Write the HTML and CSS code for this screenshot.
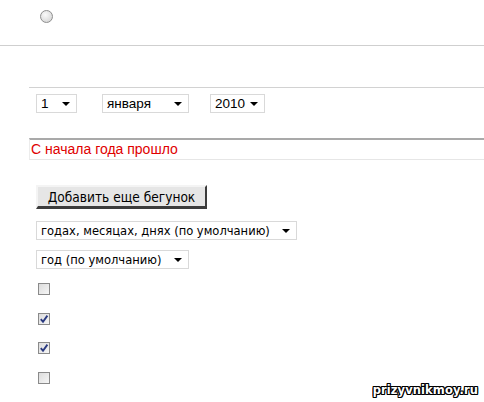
FILE: index.html
```html
<!DOCTYPE html>
<html>
<head>
<meta charset="utf-8">
<link rel="stylesheet" href="styles.css">
</head>
<body>
<div class="top">
  <span class="radio"></span>
</div>
<div class="rule"></div>
<div class="content">
  <div class="date-block">
    <div class="date-row">
      <div class="sel sel-day"><span>1</span><i class="arrow"></i></div>
      <div class="sel sel-month"><span>января</span><i class="arrow"></i></div>
      <div class="sel sel-year"><span>2010</span><i class="arrow"></i></div>
    </div>
  </div>
  <div class="result">С начала года прошло</div>
  <div class="controls">
    <button class="btn">Добавить еще бегунок</button>
    <div class="sel sel-units t"><span>годах, месяцах, днях (по умолчанию)</span><i class="arrow"></i></div>
    <div class="sel sel-year2 t"><span>год (по умолчанию)</span><i class="arrow"></i></div>
    <div class="checks">
      <span class="cb"></span>
      <span class="cb on"><svg viewBox="0 0 12 12" width="12" height="12"><path d="M2.8 6.2 L5 8.8 L9.4 2.6" fill="none" stroke="#2a3a80" stroke-width="1.9"/></svg></span>
      <span class="cb on"><svg viewBox="0 0 12 12" width="12" height="12"><path d="M2.8 6.2 L5 8.8 L9.4 2.6" fill="none" stroke="#2a3a80" stroke-width="1.9"/></svg></span>
      <span class="cb"></span>
    </div>
  </div>
</div>
<div class="watermark">prizyvnikmoy.ru</div>
</body>
</html>
```

FILE: styles.css
```css
html, body {
  margin: 0;
  padding: 0;
  background: #fff;
  width: 484px;
  height: 402px;
  overflow: hidden;
  position: relative;
  font-family: "Liberation Sans", Arial, sans-serif;
  font-size: 13.5px;
  color: #000;
}
.top {
  height: 45px;
  padding-left: 40px;
  padding-top: 10px;
  box-sizing: border-box;
}
.radio {
  display: block;
  width: 11px;
  height: 11px;
  border-radius: 50%;
  border: 1px solid #8e8e8e;
  background: radial-gradient(circle at 40% 35%, #fafafa 0, #e2e2e2 55%, #cfcfcf 100%);
}
.rule {
  height: 1px;
  background: #cfcfcf;
}
.content {
  padding-left: 29px;
  padding-top: 41px;
}
.date-block {
  border-top: 1px solid #d2d2d2;
  padding: 6px 0 0 7px;
  height: 44px;
}
.date-row {
  display: flex;
  gap: 0;
}
.sel {
  display: flex;
  align-items: center;
  justify-content: space-between;
  box-sizing: border-box;
  height: 19px;
  border: 1px solid #d9d9d9;
  background: #fff;
  padding: 0 6px 0 4px;
  line-height: 17px;
}
.sel .arrow {
  width: 0;
  height: 0;
  border-left: 4px solid transparent;
  border-right: 4px solid transparent;
  border-top: 4px solid #000;
}
.sel-day { width: 41px; }
.sel-month { width: 87px; margin-left: 25px; }
.sel-year { width: 55px; margin-left: 21px; }
.result {
  border-top: 2px solid #a9a9a9;
  border-left: 1px solid #ececec;
  border-bottom: 1px solid #e6e6e6;
  color: #e00000;
  padding: 0 0 0 1px;
  font-size: 14px;
  line-height: 19px;
  height: 19px;
}
.controls {
  padding: 25px 0 0 7px;
}
.btn {
  display: block;
  width: 171px;
  height: 24px;
  box-sizing: border-box;
  background: #e6e6e6;
  border-top: 2px solid #f4f4f4;
  border-left: 2px solid #f4f4f4;
  border-right: 2px solid #3c3c3c;
  border-bottom: 3px solid #3c3c3c;
  font-family: "DejaVu Sans Condensed", Tahoma, sans-serif;
  font-size: 13.6px;
  color: #000;
  padding: 0;
  margin: 0;
}
.t {
  font-family: "DejaVu Sans Condensed", Tahoma, sans-serif;
  font-size: 12.8px;
}
.sel-units { width: 261px; margin-top: 12px; }
.sel-year2 { width: 153px; margin-top: 10px; }
.checks {
  display: flex;
  flex-direction: column;
  gap: 17.7px;
  padding: 14px 0 0 2px;
}
.cb {
  display: block;
  width: 12px;
  height: 12px;
  box-sizing: border-box;
  border: 1px solid #8a8a8a;
  background: linear-gradient(135deg, #dcdcdc, #f6f6f6);
  position: relative;
}
.cb svg {
  position: absolute;
  left: -1px;
  top: -1px;
}
.watermark {
  position: absolute;
  right: 6px;
  bottom: 5px;
  font-family: "DejaVu Sans", sans-serif;
  font-weight: bold;
  font-size: 11.5px;
  line-height: 14px;
  color: #fff;
  letter-spacing: 0.1px;
  text-shadow: 1px 0 0 #000, -1px 0 0 #000, 0 1px 0 #000, 0 -1px 0 #000, 1px 1px 0 #000, -1px -1px 0 #000, 1px -1px 0 #000, -1px 1px 0 #000;
}
```
